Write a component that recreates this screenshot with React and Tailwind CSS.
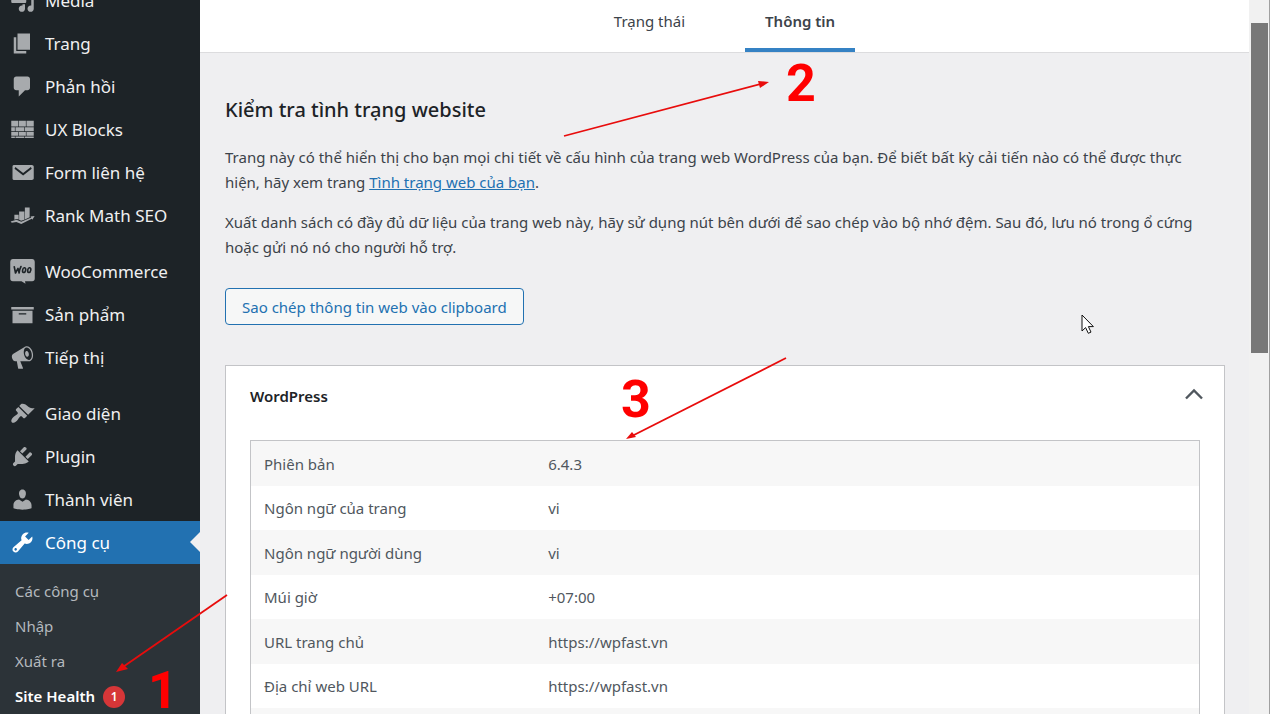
import React from "react";

const ICONS = {
  media: (
    <path d="M13 11V4c0-.55-.45-1-1-1h-1.67L9 1H5L3.67 3H2c-.55 0-1 .45-1 1v7c0 .55.45 1 1 1h10c.55 0 1-.45 1-1zM7 4.5c1.38 0 2.5 1.12 2.5 2.5S8.38 9.5 7 9.5 4.5 8.38 4.5 7 5.62 4.5 7 4.5zM14 6h5v10.5c0 1.38-1.12 2.5-2.5 2.5S14 17.88 14 16.5s1.12-2.5 2.5-2.5c.17 0 .34.02.5.05V9h-3V6zm-4 8.05V13h2v3.5c0 1.38-1.12 2.5-2.5 2.5S7 17.88 7 16.5 8.12 14 9.5 14c.17 0 .34.02.5.05z" />
  ),
  page: <path d="M6 15V2h10v13H6zm-1 1h8v2H3V5h2v11z" />,
  comments: (
    <path d="M5 2h9c1.1 0 2 .9 2 2v7c0 1.1-.9 2-2 2h-2l-5 5v-5H5c-1.1 0-2-.9-2-2V4c0-1.1.9-2 2-2z" />
  ),
  blocks: (
    <path d="M1 3h5.500v4.500H1zM7 3h5.700v4.500H7zM13.200 3H19v4.500h-5.800zM1 8.100h2.900v3.200H1zM4.400 8.100h7.100v3.200H4.400zM12 8.100h7v3.200h-7zM1 11.900h5.500v3H1zM7 11.900h5.700v3H7zM13.200 11.900H19v3h-5.800zM1 15.500h2.900v1.300H1zM4.400 15.500h7.100v1.300H4.400zM12 15.500h7v1.300h-7z" />
  ),
  email: (
    <path
      fillRule="evenodd"
      d="M3 4h14.500c.8 0 1.500.6 1.500 1.400v9.200c0 .8-.7 1.400-1.500 1.400H3c-.6 0-1-.6-1-1.400V5.400C2 4.600 2.400 4 3 4zM4.300 5.600l-.7 1.300 6.900 5.500 6.900-5.500-.7-1.300-6.200 4.800z"
    />
  ),
  rank: (
    <path d="M3.500 9.400h3.400v3.800l-1.600-.5-1.800.6zM7.300 6.700h4.200v6.600l-2.600.9-1.600-.8zM11.900 3.600h3.800v7.700l-3.800 1.800zM.5 14.700l4.700-1.300 3.800 1.600 8-3.500-.6-.8 3.300-.3-1.800 2.900-.5-.7-8.400 4.200-3.900-1.700-3.700.7z" />
  ),
  archive: <path d="M19 4v2H1V4h18zM2 7h16v10H2V7zm11 3V9H7v1h6z" />,
  megaphone: (
    <path d="M18.150 5.940c.46 1.620.38 3.220-.02 4.480-.42 1.280-1.260 2.180-2.300 2.480-.16.06-.26.06-.4.06-.06.02-.12.02-.18.02-.06.02-.14.02-.22.02h-6.800l2.220 5.500c.02.14-.06.26-.14.34-.08.1-.24.16-.34.16H6.950c-.1 0-.26-.06-.34-.16-.08-.08-.16-.2-.14-.34l-1-5.500H4.250l-.02-.02c-.5.06-1.080-.18-1.540-.62s-.88-1.080-1.060-1.880c-.24-.8-.2-1.560-.02-2.200.18-.62.58-1.080 1.060-1.300l.02-.02 9-5.400c.1-.06.18-.1.24-.16.06-.04.14-.08.24-.12.16-.08.28-.12.5-.18 1.040-.3 2.240.1 3.220.98s1.840 2.240 2.260 3.860zm-2.580 5.980h-.02c.4-.1.74-.34 1.040-.7.58-.7.86-1.760.86-3.040 0-.64-.1-1.300-.28-1.980-.34-1.360-1.020-2.500-1.780-3.240s-1.680-1.100-2.460-.88c-.82.22-1.400.96-1.700 2-.32 1.040-.28 2.360.06 3.720.38 1.360 1 2.500 1.800 3.240.78.74 1.620 1.100 2.480.88zm-2.540-7.080c.22-.04.42-.02.62.04.38.16.76.48 1.020 1s.42 1.200.42 1.780c0 .3-.04.56-.12.8-.18.48-.44.84-.86.94-.34.1-.8-.06-1.140-.4s-.64-.86-.78-1.500c-.18-.62-.12-1.240.02-1.720s.48-.84.82-.94z" />
  ),
  appearance: (
    <path d="M14.480 11.060L7.410 3.990l1.500-1.500c.5-.56 2.300-.47 3.510.32 1.210.8 1.430 1.280 2.910 2.100 1.180.64 2.450 1.260 4.450.85zm-.71.71L6.700 4.700 4.930 6.470c-.39.39-.39 1.020 0 1.410l1.060 1.060c.39.39.39 1.030 0 1.420-.6.6-1.430 1.110-2.210 1.690-.35.26-.7.53-1.010.84C1.430 14.230.4 16.080 1.400 17.070c.99 1 2.840-.03 4.180-1.360.31-.31.58-.66.85-1.020.57-.78 1.080-1.610 1.690-2.210.39-.39 1.020-.39 1.410 0l1.060 1.060c.39.39 1.020.39 1.410 0z" />
  ),
  plugins: (
    <path d="M13.110 4.360L9.870 7.600 8 5.730l3.240-3.240c.35-.34 1.050-.2 1.560.32.52.51.66 1.210.31 1.550zm-8 1.770l.91-1.120 9.010 9.010-1.190.84c-.71.71-2.630 1.160-3.820 1.160H6.140L4.900 17.260c-.59.59-1.540.59-2.120 0-.59-.58-.59-1.530 0-2.120l1.240-1.240v-3.880c0-1.130.4-3.190 1.090-3.890zm7.260 3.970l3.240-3.240c.34-.35 1.040-.21 1.550.31.52.51.66 1.210.31 1.550l-3.240 3.250z" />
  ),
  users: (
    <path d="M10 9.250c-2.270 0-2.730-3.440-2.730-3.440C7 4.020 7.820 2 9.970 2c2.160 0 2.980 2.020 2.710 3.810 0 0-.41 3.440-2.680 3.440zm0 2.570L12.720 10c2.390 0 4.520 2.330 4.520 4.530v2.490s-3.650 1.130-7.240 1.130c-3.650 0-7.240-1.130-7.240-1.130v-2.490c0-2.250 1.940-4.480 4.470-4.480z" />
  ),
  tools: (
    <path d="M16.680 9.770c-1.340 1.340-3.300 1.670-4.950.99l-5.410 6.520c-.99.99-2.590.99-3.580 0s-.99-2.590 0-3.570l6.520-5.420c-.68-1.650-.35-3.610.99-4.950 1.280-1.280 3.120-1.620 4.720-1.060l-2.890 2.890 2.820 2.820 2.860-2.870c.53 1.580.18 3.390-1.080 4.650zM3.810 16.210c.4.39 1.040.39 1.430 0 .4-.4.4-1.040 0-1.430-.39-.4-1.030-.4-1.430 0-.39.39-.39 1.030 0 1.430z" />
  ),
  woo: (
    <>
      <path d="M2.500 0h15A2.200 2.200 0 0 1 19.800 2.200v13.400a2.200 2.200 0 0 1-2.300 2.200h-5.500l.4 2-3.200-2H2.500A2.200 2.200 0 0 1 .2 15.600V2.200A2.200 2.200 0 0 1 2.500 0z" />
      <g fill="none" stroke="#1d2327" strokeWidth="1.300" strokeLinecap="round" strokeLinejoin="round">
        <path d="M3.400 6.200l1 5 2-3.700.9 3.700c.2-2.200.7-3.800 1.500-5.200" />
        <ellipse cx="11.300" cy="8.900" rx="1.200" ry="1.900" transform="rotate(12 11.300 8.900)" />
        <ellipse cx="15.400" cy="8.900" rx="1.200" ry="1.900" transform="rotate(12 15.400 8.900)" />
      </g>
    </>
  ),
};

const MENU = [
  [
    ["media", "Media"],
    ["page", "Trang"],
    ["comments", "Phản hồi"],
    ["blocks", "UX Blocks"],
    ["email", "Form liên hệ"],
    ["rank", "Rank Math SEO"],
  ],
  [
    ["woo", "WooCommerce"],
    ["archive", "Sản phẩm"],
    ["megaphone", "Tiếp thị"],
  ],
  [
    ["appearance", "Giao diện"],
    ["plugins", "Plugin"],
    ["users", "Thành viên"],
    ["tools", "Công cụ"],
  ],
];

const ROWS = [
  ["Phiên bản", "6.4.3"],
  ["Ngôn ngữ của trang", "vi"],
  ["Ngôn ngữ người dùng", "vi"],
  ["Múi giờ", "+07:00"],
  ["URL trang chủ", "https://wpfast.vn"],
  ["Địa chỉ web URL", "https://wpfast.vn"],
];

function MenuItem({ icon, label }) {
  const active = icon === "tools";
  return (
    <li>
      <a
        href="#"
        className={
          active
            ? "relative flex h-[43px] items-center gap-2.5 bg-[#2271b1] pl-2.5 text-white"
            : "flex h-[43px] items-center gap-2.5 pl-2.5 text-[#f0f0f1]"
        }
      >
        <svg
          viewBox="0 0 20 20"
          aria-hidden="true"
          className={active ? "size-[25px] fill-white" : "size-[25px] fill-[#a7aaad]"}
        >
          {ICONS[icon]}
        </svg>
        {label}
        {active && (
          <svg viewBox="0 0 10 20" aria-hidden="true" className="absolute top-[11px] right-0 h-5 w-2.5 fill-[#f0f0f1]">
            <path d="M10 0v20L0 10z" />
          </svg>
        )}
      </a>
    </li>
  );
}

function Sidebar() {
  return (
    <nav aria-label="Menu" className="flex w-[200px] shrink-0 flex-col bg-[#1d2327] text-[17px]">
      <div className="-mt-[21px] flex shrink-0 flex-col gap-[13px]">
        {MENU.map((group, i) => (
          <ul key={i}>
            {group.map(([icon, label]) => (
              <MenuItem key={icon} icon={icon} label={label} />
            ))}
          </ul>
        ))}
      </div>
      <ul className="grow bg-[#2c3338] pt-2.5 text-[15px] text-[#b4b9be]">
        {["Các công cụ", "Nhập", "Xuất ra"].map((t) => (
          <li key={t}>
            <a href="#" className="flex h-[35px] items-center pl-[15px]">
              {t}
            </a>
          </li>
        ))}
        <li>
          <a href="#" className="flex h-[35px] items-center gap-2 pl-[15px] font-semibold text-white">
            Site Health
            <span className="flex size-[22px] items-center justify-center rounded-full bg-[#d63638] text-xs">1</span>
          </a>
        </li>
      </ul>
    </nav>
  );
}

function Arrow({ className, w, h, line, head }) {
  return (
    <svg aria-hidden="true" viewBox={`0 0 ${w} ${h}`} width={w} height={h} className={className}>
      <path d={line} stroke="#e80c0c" strokeWidth="1.800" />
      <path d={head} fill="#e80c0c" />
    </svg>
  );
}

function Annotations() {
  return (
    <div className="pointer-events-none absolute inset-0 font-[Roboto,sans-serif] text-[52px] leading-none font-bold text-[#ff0000]">
      <Arrow className="absolute top-[590px] left-[110px]" w={120} h={90} line="M117 5L10 79" head="M6 82L12 73L18 79Z" />
      <span className="absolute top-[665px] left-[148px]">1</span>
      <Arrow className="absolute top-[75px] left-[560px]" w={215} h={65} line="M4 61L204 8" head="M209 7L198 6L200 13Z" />
      <span className="absolute top-[58px] left-[786px]">2</span>
      <Arrow className="absolute top-[352px] left-[620px]" w={170} h={90} line="M166 6L10 85" head="M6 87L12 80L16 85Z" />
      <span className="absolute top-[374px] left-[621px]">3</span>
      <svg aria-hidden="true" viewBox="0 0 14 21" className="absolute top-[314px] left-[1081px] h-[21px] w-3.5">
        <path d="M1 1v16l3.600-3.400 2.700 5.700 2.700-1.200-2.600-5.500h5z" fill="#fff" stroke="#111" strokeWidth="1" />
      </svg>
    </div>
  );
}

export default function App() {
  return (
    <div className="relative flex h-screen overflow-hidden bg-[#efeff1] font-['Noto_Sans',sans-serif] text-base text-[#3c434a]">
      <Sidebar />
      <main className="min-w-0 grow">
        <header className="flex h-[53px] justify-center gap-10 border-b border-[#dcdcde] bg-white text-[15px]">
          <a href="#" className="flex items-center border-b-4 border-transparent px-5 pb-1.5">
            Trạng thái
          </a>
          <a href="#" aria-current="page" className="flex items-center border-b-4 border-[#3582c4] px-5 pb-1.5 font-semibold">
            Thông tin
          </a>
        </header>
        <div className="pt-[43px] pr-6 pl-[25px] text-[15px] leading-[25px]">
          <h1 className="text-xl leading-7 font-medium text-[#1d2327]">Kiểm tra tình trạng website</h1>
          <p className="mt-[21px] pr-4">
            Trang này có thể hiển thị cho bạn mọi chi tiết về cấu hình của trang web WordPress của bạn. Để biết bất kỳ
            cải tiến nào có thể được thực hiện, hãy xem trang{" "}
            <a href="#" className="text-[#2271b1] underline">
              Tình trạng web của bạn
            </a>
            .
          </p>
          <p className="mt-[15px]">
            Xuất danh sách có đầy đủ dữ liệu của trang web này, hãy sử dụng nút bên dưới để sao chép vào bộ nhớ đệm.
            Sau đó, lưu nó trong ổ cứng hoặc gửi nó nó cho người hỗ trợ.
          </p>
          <button
            type="button"
            className="mt-7 flex h-[37px] items-center rounded-[4px] border border-[#2271b1] bg-[#f6f7f7] px-4 pt-0.5 text-[#2271b1]"
          >
            Sao chép thông tin web vào clipboard
          </button>
          <section className="mt-10 border border-[#c3c4c7] bg-white px-6">
            <h2>
              <button
                type="button"
                aria-expanded="true"
                className="flex h-15 w-full items-center justify-between font-semibold text-[#1d2327]"
              >
                WordPress
                <svg viewBox="0 0 20 12" aria-hidden="true" className="-mr-1 mb-1 h-3 w-5">
                  <path d="M2 10.500L10 2.500L18 10.500" fill="none" stroke="#50575e" strokeWidth="2.400" />
                </svg>
              </button>
            </h2>
            <table className="mt-3.5 w-full table-fixed border border-[#c3c4c7] text-left text-[#50575e]">
              <tbody>
                {ROWS.map(([k, v]) => (
                  <tr key={k} className="odd:h-[45px] odd:bg-[#f7f7f7] even:h-11">
                    <th scope="row" className="w-[30%] pt-0.5 pl-[13px] font-normal">
                      {k}
                    </th>
                    <td className="pt-0.5 pl-[13px]">{v}</td>
                  </tr>
                ))}
                <tr className="h-[45px] bg-[#f7f7f7]">
                  <th />
                  <td />
                </tr>
              </tbody>
            </table>
          </section>
        </div>
      </main>
      <div aria-hidden="true" className="w-[21px] shrink-0 border-r border-[#a0a0a0] bg-[#f1f1f1] pt-[23px]">
        <div className="mr-px ml-0.5 h-[330px] bg-[#787878]" />
      </div>
      <Annotations />
    </div>
  );
}
